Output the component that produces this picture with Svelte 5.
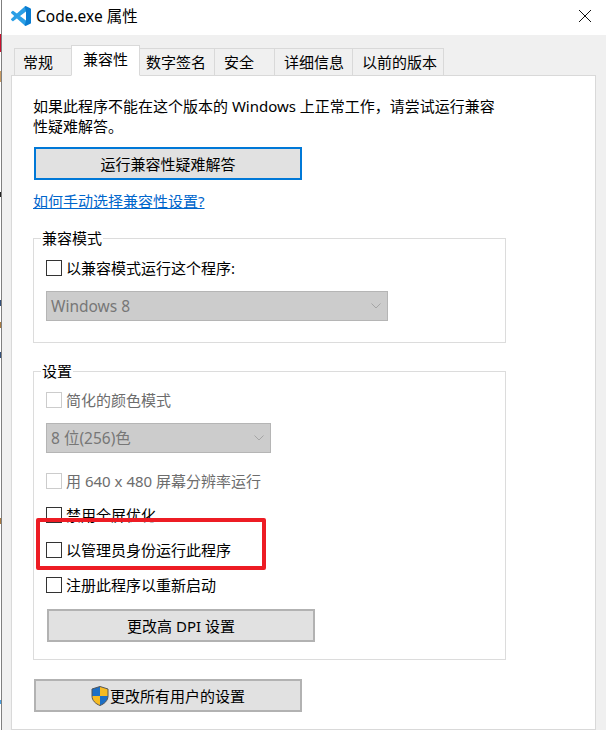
<script lang="ts">
  const tabs = ['常规', '兼容性', '数字签名', '安全', '详细信息', '以前的版本'];
  const active = '兼容性';
</script>

<div class="screen">
  <div class="strip"></div>

  <div class="window">
    <header class="titlebar">
      <svg class="app-icon" viewBox="0 0 100 100" aria-hidden="true">
        <path fill="#2b9fe6" d="M12.2 25a4.2 4.2 0 0 0-5.3.2L1.400 30.200a4.200 4.200 0 0 0 0 6.200L16.300 50 1.400 63.600a4.200 4.200 0 0 0 0 6.200l5.500 5a4.200 4.200 0 0 0 5.300.2L75 27.300V5L68.800 2.100 29.400 38.100z M29.400 61.900 45.100 50 75 72.700V95l-6.200 2.900z"/>
        <path fill="#0a7cd0" d="M70.900 99.300a6.200 6.200 0 0 0 5-.2l20.600-9.900a6.200 6.200 0 0 0 3.500-5.600V16.400a6.200 6.200 0 0 0-3.500-5.600L75.900.9a6.200 6.200 0 0 0-7.100 1.200L75 27.300v45.400l-6.200 25.200a6.200 6.200 0 0 0 2.100 1.400z"/>
      </svg>
      <span class="title">Code.exe 属性</span>
      <svg class="close" viewBox="0 0 12 12" aria-hidden="true">
        <path d="M0 0 12 12M12 0 0 12" stroke="#111" stroke-width="1" fill="none"/>
      </svg>
    </header>

    <div class="body">
      <nav class="tabs">
        {#each tabs as tab}
          <button class="tab" class:active={tab === active}>{tab}</button>
        {/each}
      </nav>

      <section class="panel">
        <p class="intro">如果此程序不能在这个版本的 Windows 上正常工作，请尝试运行兼容<br />性疑难解答。</p>

        <button class="btn focused">运行兼容性疑难解答</button>

        <a class="help" href="#help">如何手动选择兼容性设置?</a>

        <fieldset class="group first">
          <legend>兼容模式</legend>
          <label class="check mode"><input type="checkbox" />以兼容模式运行这个程序:</label>
          <div class="select wide">
            <span>Windows 8</span>
            <svg viewBox="0 0 10 6" aria-hidden="true"><path d="M.5.500 5 5l4.500-4.500" /></svg>
          </div>
        </fieldset>

        <fieldset class="group second">
          <legend>设置</legend>
          <label class="check off color"><input type="checkbox" disabled />简化的颜色模式</label>
          <div class="select narrow">
            <span>8 位(256)色</span>
            <svg viewBox="0 0 10 6" aria-hidden="true"><path d="M.5.500 5 5l4.500-4.500" /></svg>
          </div>
          <label class="check off res"><input type="checkbox" disabled />用 640 x 480 屏幕分辨率运行</label>
          <label class="check full"><input type="checkbox" />禁用全屏优化</label>
          <label class="check admin"><input type="checkbox" />以管理员身份运行此程序</label>
          <label class="check restart"><input type="checkbox" />注册此程序以重新启动</label>
          <button class="btn dpi">更改高 DPI 设置</button>
        </fieldset>

        <button class="btn all-users">
          <svg class="shield" viewBox="0 0 18 20" aria-hidden="true">
            <defs>
              <clipPath id="shield-clip">
                <path d="M9 .5 17 3V10C17 14.500 13.500 17.800 9 19.500 4.500 17.800 1 14.500 1 10V3Z" />
              </clipPath>
            </defs>
            <g clip-path="url(#shield-clip)">
              <rect x="0" y="0" width="9" height="10" fill="#1c6fc6" />
              <rect x="9" y="0" width="9" height="10" fill="#f6bb23" />
              <rect x="0" y="10" width="9" height="10" fill="#f6bb23" />
              <rect x="9" y="10" width="9" height="10" fill="#1c6fc6" />
            </g>
            <path d="M9 .5 17 3V10C17 14.500 13.500 17.800 9 19.500 4.500 17.800 1 14.500 1 10V3Z" fill="none" stroke="#555" stroke-width="1" />
          </svg>
          更改所有用户的设置
        </button>
      </section>
    </div>
  </div>

  <!-- red annotation drawn over the dialog -->
  <div class="annotation"></div>
</div>

<style>
  :global(body) {
    margin: 0;
    background: #fff;
  }

  .screen {
    position: relative;
    display: flex;
    width: 606px;
    height: 730px;
    overflow: hidden;
    font-family: "Noto Sans", "Noto Sans CJK SC", sans-serif;
    font-size: 15px;
    line-height: 20px;
    color: #000;
  }

  /* sliver of the desktop behind the dialog */
  .strip {
    flex: 0 0 1px;
    background: linear-gradient(
      to bottom,
      #fff 0 34px,
      #c8102e 34px 52px,
      #fff 52px 71px,
      #c89a60 71px 82px,
      #fff 82px 192px,
      #222 192px 197px,
      #fff 197px 300px,
      #33507a 300px 306px,
      #fff 306px 322px,
      #a87a40 322px 328px,
      #fff 328px 352px,
      #33507a 352px 358px,
      #fff 358px 518px,
      #a87a40 518px 524px,
      #fff 524px 700px,
      #4aa0e0 700px 704px,
      #fff 704px
    );
  }

  .window {
    flex: 1;
    display: flex;
    flex-direction: column;
    border-left: 1px solid #7f7f7f;
    background: #f0f0f0;
    min-width: 0;
  }

  .titlebar {
    flex: 0 0 35px;
    box-sizing: border-box;
    display: flex;
    align-items: center;
    padding: 0 15px 3px 9px;
    background: #fff;
  }

  .app-icon {
    width: 20px;
    height: 20px;
  }

  .title {
    margin: 0 0 1px 5px;
    font-size: 15.500px;
  }

  .close {
    width: 12px;
    height: 12px;
    margin-left: auto;
  }

  .body {
    flex: 1;
    display: flex;
    flex-direction: column;
    padding: 11px 10px 0 9px;
    min-height: 0;
  }

  .tabs {
    display: flex;
    align-items: flex-end;
    height: 30px;
    padding-left: 3px;
    position: relative;
    z-index: 1;
    margin-bottom: -1px;
  }

  .tab {
    height: 28px;
    padding: 0 0 0 10px;
    margin: 0 0 0 -1px;
    border: 1px solid #d9d9d9;
    background: #f0f0f0;
    font: inherit;
    color: inherit;
    text-align: left;
    white-space: nowrap;
  }

  .tab:nth-child(1) { width: 58px; margin-left: 0; padding-left: 8px; }
  .tab:nth-child(2) { width: 69px; padding-left: 11px; }
  .tab:nth-child(3) { width: 76px; padding-left: 6px; }
  .tab:nth-child(4) { width: 61px; padding-left: 9px; }
  .tab:nth-child(5) { width: 79px; padding-left: 9px; }
  .tab:nth-child(6) { width: 92px; padding-left: 9px; }

  .tab.active {
    height: 31px;
    background: #fff;
    border-bottom-color: #fff;
    position: relative;
    z-index: 1;
    padding-bottom: 3px;
  }

  .panel {
    flex: 1;
    padding: 20px 0 0 21px;
    border: 1px solid #d9d9d9;
    background: #fff;
    display: flex;
    flex-direction: column;
    align-items: flex-start;
  }

  .intro {
    margin: 0;
    white-space: nowrap;
  }

  .btn {
    width: 268px;
    height: 33px;
    box-sizing: border-box;
    padding: 0;
    border: 2px solid #b2b2b2;
    background: #e1e1e1;
    font: inherit;
    color: inherit;
    display: flex;
    align-items: center;
    justify-content: center;
    flex-shrink: 0;
  }

  .btn.focused {
    margin: 11px 0 0 1px;
    border-color: #0078d7;
  }

  .help {
    margin-top: 11px;
    color: #0066cc;
  }

  .group {
    width: 473px;
    box-sizing: border-box;
    margin: 17px 0 0;
    padding: 0 0 21px 12px;
    border: 1px solid #dcdcdc;
    min-width: 0;
  }

  .group.second {
    margin-top: 18px;
    padding-bottom: 17px;
  }

  legend {
    margin-left: -5px;
    padding: 0 1px;
  }

  .check {
    display: flex;
    align-items: center;
    gap: 4px;
    white-space: nowrap;
  }

  .check input {
    appearance: none;
    width: 16px;
    height: 16px;
    margin: 0;
    box-sizing: border-box;
    border: 1px solid #333;
    background: #fff;
  }

  .check.off { color: #6d6d6d; }
  .check.off input { border-color: #ccc; }

  .mode { margin-top: 10px; }
  .color { margin-top: 9px; }
  .res { margin-top: 18px; }
  .full { margin-top: 14px; }
  .admin { margin-top: 15px; }
  .restart { margin-top: 15px; }

  .select {
    height: 30px;
    box-sizing: border-box;
    margin-top: 13px;
    padding: 0 5px 0 4px;
    border: 1px solid #b5b5b5;
    background: #ccc;
    color: #777;
    font-size: 15.500px;
    display: flex;
    align-items: center;
    justify-content: space-between;
  }

  .select svg {
    width: 10px;
    height: 6px;
    margin-right: 1px;
    fill: none;
    stroke: #a5a5a5;
    stroke-width: 1;
  }

  .select.wide { width: 342px; }
  .select.narrow { width: 225px; }

  .btn.dpi { margin: 14px 0 0 1px; }

  .btn.all-users {
    margin: 19px 0 0 1px;
    gap: 1px;
  }

  .shield {
    width: 18px;
    height: 20px;
  }

  .annotation {
    position: absolute;
    left: 36px;
    top: 518px;
    width: 230px;
    height: 52px;
    box-sizing: border-box;
    border: 4px solid #ed1c24;
    border-radius: 2px;
  }
</style>
